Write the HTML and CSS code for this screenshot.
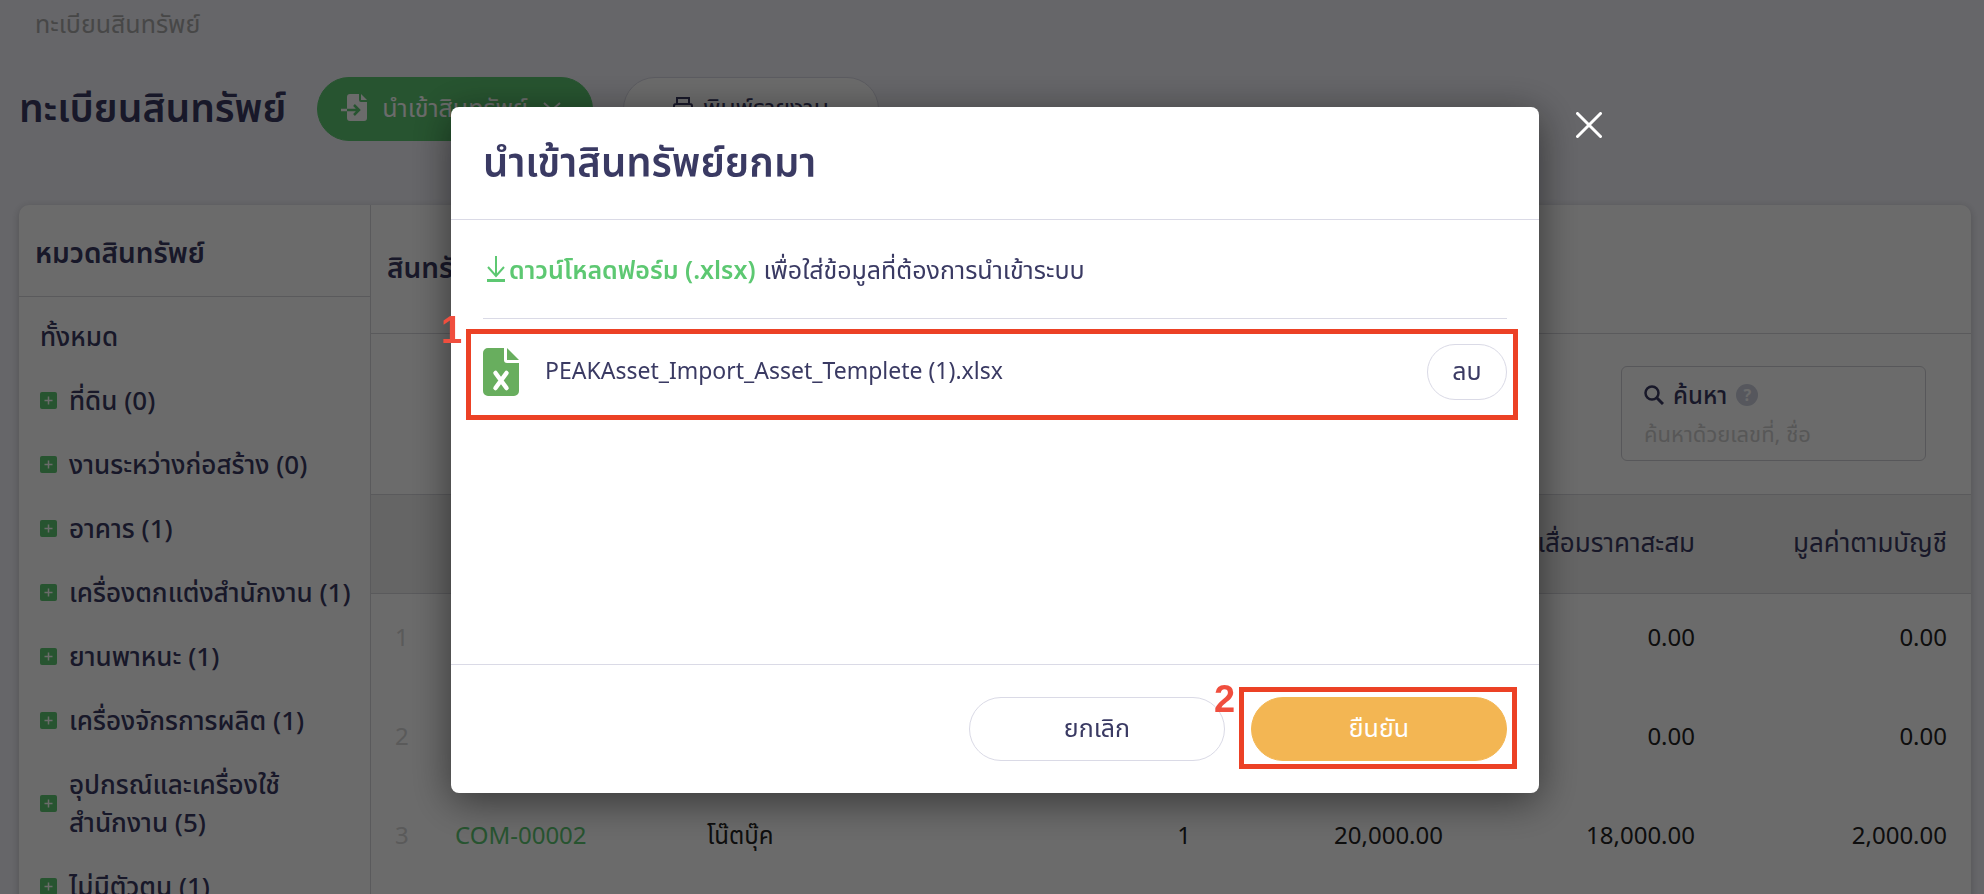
FILE: index.html
```html
<!DOCTYPE html>
<html lang="th">
<head>
  <meta charset="UTF-8">
  <meta name="viewport" content="width=device-width, initial-scale=1.0">
  <title>ทะเบียนสินทรัพย์</title>
  <link rel="stylesheet" href="styles.css">
</head>
<body>
  <svg class="sprite" aria-hidden="true">
    <symbol id="plus" viewBox="0 0 17 17">
      <rect width="17" height="17" rx="2" fill="#5dc872"/>
      <path d="M8.500 4.500v8M4.500 8.500h8" stroke="#fff" stroke-width="1.500" fill="none"/>
    </symbol>
  </svg>
  <div class="page">
    <nav class="crumb">ทะเบียนสินทรัพย์</nav>
    <header class="page-head">
      <h1>ทะเบียนสินทรัพย์</h1>
      <button class="btn btn-green" type="button">
        <svg width="26" height="27" viewBox="0 0 26 27"><path d="M9 0h9v6a2 2 0 0 0 2 2h6v16a3 3 0 0 1-3 3H9a3 3 0 0 1-3-3V3a3 3 0 0 1 3-3z" fill="#fff"/><path d="M20 0l6 6h-6z" fill="#fff"/><path d="M0 16h6" stroke="#fff" stroke-width="2.500"/><path d="M6 16h12M13 11l5 5-5 5" fill="none" stroke="#5dc872" stroke-width="2.500"/></svg>
        <span>นำเข้าสินทรัพย์</span>
        <svg width="18" height="10" viewBox="0 0 18 10"><path d="M1 1l8 7 8-7" fill="none" stroke="#fff" stroke-width="2"/></svg>
      </button>
      <button class="btn btn-print" type="button">
        <svg width="20" height="20" viewBox="0 0 20 20"><path d="M4 7V1h12v6M4 15H1V9a2 2 0 0 1 2-2h14a2 2 0 0 1 2 2v6h-3M4 12h12v7H4z" fill="none" stroke="#3a3a63" stroke-width="2"/></svg>
        <span>พิมพ์รายงาน</span>
      </button>
    </header>
    <main class="panel">
      <aside class="side">
        <h2>หมวดสินทรัพย์</h2>
        <ul>
          <li>ทั้งหมด</li>
          <li><svg><use href="#plus"/></svg><span>ที่ดิน (0)</span></li>
          <li><svg><use href="#plus"/></svg><span>งานระหว่างก่อสร้าง (0)</span></li>
          <li><svg><use href="#plus"/></svg><span>อาคาร (1)</span></li>
          <li><svg><use href="#plus"/></svg><span>เครื่องตกแต่งสำนักงาน (1)</span></li>
          <li><svg><use href="#plus"/></svg><span>ยานพาหนะ (1)</span></li>
          <li><svg><use href="#plus"/></svg><span>เครื่องจักรการผลิต (1)</span></li>
          <li><svg><use href="#plus"/></svg><span>อุปกรณ์และเครื่องใช้<br>สำนักงาน (5)</span></li>
          <li><svg><use href="#plus"/></svg><span>ไม่มีตัวตน (1)</span></li>
        </ul>
      </aside>
      <section class="list">
        <h2>สินทรัพย์ทั้งหมด</h2>
        <div class="filter">
          <div class="search">
            <label for="q">
              <svg width="20" height="20" viewBox="0 0 20 20"><circle cx="8" cy="8" r="6.500" fill="none" stroke="#3a3a63" stroke-width="2.500"/><path d="M13 13l6 6" stroke="#3a3a63" stroke-width="3"/></svg>
              ค้นหา
              <i class="help">?</i>
            </label>
            <input id="q" type="text" placeholder="ค้นหาด้วยเลขที่, ชื่อ">
          </div>
        </div>
        <table>
          <colgroup><col class="c-no"><col class="c-data"><col><col class="c-data"><col class="c-data"><col class="c-data"><col class="c-data"></colgroup>
          <thead>
            <tr><th></th><th></th><th></th><th></th><th></th><th>ค่าเสื่อมราคาสะสม</th><th>มูลค่าตามบัญชี</th></tr>
          </thead>
          <tbody>
            <tr><td>1</td><td></td><td></td><td></td><td></td><td>0.00</td><td>0.00</td></tr>
            <tr><td>2</td><td></td><td></td><td></td><td></td><td>0.00</td><td>0.00</td></tr>
            <tr><td>3</td><td><a href="#">COM-00002</a></td><td>โน๊ตบุ๊ค</td><td>1</td><td>20,000.00</td><td>18,000.00</td><td>2,000.00</td></tr>
          </tbody>
        </table>
      </section>
    </main>
  </div>

  <div class="overlay">
    <div class="modal" role="dialog" aria-labelledby="modal-title">
      <button class="close" type="button" aria-label="ปิด">
        <svg width="26" height="26" viewBox="0 0 26 26"><path d="M1.500 1.500l23 23M24.500 1.500l-23 23" stroke="#fff" stroke-width="3" stroke-linecap="round"/></svg>
      </button>
      <h2 class="modal-head" id="modal-title">นำเข้าสินทรัพย์ยกมา</h2>
      <div class="modal-body">
        <p class="download">
          <a href="#"><svg width="18" height="26" viewBox="0 0 18 26"><path d="M9 0v20M1 11l8 9 8-9" fill="none" stroke="#5dc872" stroke-width="2"/><path d="M0 24.500h18" stroke="#5dc872" stroke-width="3"/></svg>ดาวน์โหลดฟอร์ม (.xlsx)</a>
          เพื่อใส่ข้อมูลที่ต้องการนำเข้าระบบ
        </p>
        <div class="file">
          <svg width="36" height="48" viewBox="0 0 36 48"><path d="M5 0h16v12a3 3 0 0 0 3 3h12v28a5 5 0 0 1-5 5H5a5 5 0 0 1-5-5V5a5 5 0 0 1 5-5z" fill="#68ae5e"/><path d="M24 0l12 12H24z" fill="#68ae5e"/><path d="M12.500 25l11 15M23.500 25l-11 15" stroke="#fff" stroke-width="4.500" stroke-linecap="round"/></svg>
          <span>PEAKAsset_Import_Asset_Templete (1).xlsx</span>
          <button class="btn btn-small" type="button">ลบ</button>
          <b class="mark mark-file"><em>1</em></b>
        </div>
      </div>
      <div class="modal-foot">
        <button class="btn" type="button">ยกเลิก</button>
        <div class="confirm">
          <button class="btn btn-orange" type="button">ยืนยัน</button>
          <b class="mark mark-confirm"><em>2</em></b>
        </div>
      </div>
    </div>
  </div>
</body>
</html>
```
FILE: styles.css
```css
*{
  margin: 0;
  padding: 0;
  box-sizing: border-box;
  list-style: none;
}
body{
  height: 100vh;
  overflow: hidden;
  background: #f3f3fa;
  color: #3a3a63;
  font: 24px/38px "Noto Sans", "Noto Sans Thai", sans-serif;
}
a{
  color: #5dc872;
  text-decoration: none;
}
svg{
  flex: none;
}
.sprite{
  display: none;
}
.page{
  padding: 4px 13px 0 19px;
}
.crumb{
  padding-left: 16px;
  color: #aaa;
  font-size: 25px;
}
.page-head{
  display: flex;
  align-items: center;
  gap: 30px;
  margin-top: 35px;
}
h1{
  width: 268px;
  padding-bottom: 4px;
  font-size: 39px;
  font-weight: 600;
  line-height: 60px;
  white-space: nowrap;
}
.btn{
  display: flex;
  align-items: center;
  justify-content: center;
  width: 256px;
  height: 64px;
  padding-bottom: 4px;
  border: 1px solid #dadae6;
  border-radius: 32px;
  background: #fff;
  color: inherit;
  font: inherit;
  font-size: 25px;
}
.btn-green{
  gap: 15px;
  width: 276px;
  padding-right: 8px;
  border-color: #5dc872;
  background: #5dc872;
  color: #fff;
}
.btn-print{
  gap: 10px;
}
.panel{
  display: flex;
  margin-top: 64px;
  border-radius: 10px 10px 0 0;
  background: #fff;
  box-shadow: 0 2px 8px rgba(0,0,0,.2);
}
.side{
  flex: none;
  width: 352px;
  border-right: 1px solid #d6d6dc;
}
.side h2, .list h2{
  padding: 28px 16px 0;
  border-bottom: 1px solid #d6d6dc;
  font-size: 28px;
  font-weight: 600;
  line-height: 38px;
}
.side h2{
  height: 92px;
}
.side ul{
  padding: 7px 0 0 21px;
  font-size: 26px;
}
.side li{
  display: flex;
  align-items: center;
  gap: 12px;
  padding: 13px 0;
  font-weight: 500;
}
.side svg{
  width: 17px;
  height: 17px;
}
.list{
  flex: 1;
}
.list h2{
  height: 129px;
  padding-top: 43px;
}
.filter{
  display: flex;
  justify-content: flex-end;
  padding: 32px 45px 33px;
}
.search{
  width: 305px;
  height: 95px;
  padding: 9px 22px;
  border: 1px solid #d0d0d6;
  border-radius: 6px;
}
.search label{
  display: flex;
  align-items: center;
  gap: 9px;
  font-weight: 500;
  font-size: 24px;
}
.help{
  width: 22px;
  height: 22px;
  border-radius: 50%;
  background: #ccd0de;
  color: #fff;
  font: bold 16px/22px "Noto Sans", sans-serif;
  text-align: center;
}
.search input{
  width: 100%;
  border: 0;
  background: none;
  font: inherit;
  font-size: 22px;
}
.search input::placeholder{
  color: #cfcfcf;
}
table{
  width: 100%;
  border-collapse: collapse;
  table-layout: fixed;
}
.c-no{
  width: 60px;
}
.c-data{
  width: 252px;
}
th, td{
  height: 99px;
  padding: 0 24px;
  font-weight: 400;
  text-align: right;
  white-space: nowrap;
}
th{
  padding-bottom: 4px;
  font-size: 26px;
}
td{
  padding-bottom: 12px;
  color: #222;
}
td:nth-child(2), td:nth-child(3){
  text-align: left;
}
td:first-child{
  color: #d6d6d6;
}
thead tr{
  background: #f0f0f0;
  border-top: 1px solid #d6d6dc;
  border-bottom: 1px solid #d6d6dc;
}
.overlay{
  position: fixed;
  inset: 0;
  display: flex;
  align-items: flex-start;
  justify-content: center;
  padding: 107px 0 0 6px;
  background: rgba(0,0,0,.58);
}
.modal{
  position: relative;
  width: 55%;
  border-radius: 8px;
  background: #fff;
  box-shadow: 0 8px 40px rgba(0,0,0,.5);
}
.close{
  position: absolute;
  top: 5px;
  right: -63px;
  width: 26px;
  height: 26px;
  border: 0;
  background: none;
}
.close svg{
  display: block;
}
.modal-head{
  height: 113px;
  padding: 0 32px;
  border-bottom: 1px solid #dadae6;
  font-size: 40px;
  font-weight: 600;
  line-height: 110px;
}
.modal-body{
  min-height: 444px;
  padding: 0 32px;
}
.download{
  display: flex;
  gap: 8px;
  padding: 30px 4px;
  border-bottom: 1px solid #dadae6;
  font-size: 25px;
}
.download a{
  display: flex;
  align-items: center;
  gap: 4px;
  font-weight: 600;
}
.file{
  position: relative;
  display: flex;
  align-items: center;
  gap: 26px;
  margin-top: 25px;
}
.file span{
  padding-bottom: 4px;
  font-size: 23px;
}
.btn-small{
  width: 80px;
  height: 56px;
  margin-left: auto;
}
.modal-foot{
  display: flex;
  justify-content: flex-end;
  gap: 26px;
  padding: 32px;
  border-top: 1px solid #dadae6;
}
.confirm{
  position: relative;
}
.btn-orange{
  border-color: #f3b653;
  background: #f3b653;
  color: #fff;
}

/* numbered step frames */
.mark{
  position: absolute;
  border: 5px solid #ec4125;
  pointer-events: none;
}
.mark-file{
  inset: -15px -11px -20px -17px;
}
.mark-confirm{
  inset: -10px -10px -8px -12px;
}
.mark em{
  position: absolute;
  left: -30px;
  color: #f04e3e;
  font: bold 38px/44px "Liberation Sans", sans-serif;
}
.mark-file em{
  top: -26px;
}
.mark-confirm em{
  top: -15px;
}
```
